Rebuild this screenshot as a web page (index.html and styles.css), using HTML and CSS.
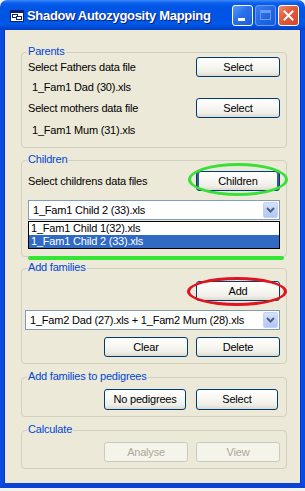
FILE: index.html
```html
<!DOCTYPE html>
<html>
<head>
<meta charset="utf-8">
<link rel="stylesheet" href="styles.css">
</head>
<body>
<div class="window">
  <div class="titlebar">
    <span class="app-icon">
      <svg width="14" height="12" viewBox="0 0 14 12">
        <rect x="0.5" y="0.5" width="13" height="11" fill="#fff" stroke="#0a1f73"/>
        <rect x="1" y="1" width="12" height="2" fill="#0a1f73"/>
        <rect x="2.5" y="4.5" width="5" height="3" fill="none" stroke="#0a1f73"/>
        <rect x="6.5" y="6.5" width="5" height="3" fill="#fff" stroke="#0a1f73"/>
      </svg>
    </span>
    <span class="title">Shadow Autozygosity Mapping</span>
    <div class="caption-buttons">
      <span class="cbtn min"><span class="min-glyph"></span></span>
      <span class="cbtn max"><span class="max-glyph"></span></span>
      <span class="cbtn close">
        <svg width="13" height="13" viewBox="0 0 13 13"><path d="M2.5 2.5 L10.5 10.5 M10.5 2.5 L2.5 10.5" stroke="#fff" stroke-width="2" stroke-linecap="square"/></svg>
      </span>
    </div>
  </div>
  <div class="client">
    <section class="group parents">
      <span class="legend">Parents</span>
      <div class="row">
        <span class="label">Select Fathers data file</span>
        <button class="btn">Select</button>
      </div>
      <div class="file file-dad">1_Fam1 Dad (30).xls</div>
      <div class="row">
        <span class="label">Select mothers data file</span>
        <button class="btn">Select</button>
      </div>
      <div class="file file-mum">1_Fam1 Mum (31).xls</div>
    </section>

    <section class="group children">
      <span class="legend">Children</span>
      <div class="row">
        <span class="label">Select childrens data files</span>
        <button class="btn btn-focus">Children</button>
      </div>
      <div class="combo combo-children">
        <span class="combo-text">1_Fam1 Child 2 (33).xls</span>
        <span class="combo-arrow"><svg width="9" height="6" viewBox="0 0 9 6"><path d="M1 1 L4.5 4.5 L8 1" fill="none" stroke="#4d6185" stroke-width="2"/></svg></span>
      </div>
      <ul class="droplist">
        <li>1_Fam1 Child 1(32).xls</li>
        <li class="selected">1_Fam1 Child 2 (33).xls</li>
      </ul>
      <span class="ring ring-green"></span>
      <span class="mark-line"></span>
    </section>

    <section class="group families">
      <span class="legend">Add families</span>
      <div class="row row-end">
        <button class="btn">Add</button>
      </div>
      <div class="combo combo-families">
        <span class="combo-text">1_Fam2 Dad (27).xls + 1_Fam2 Mum (28).xls</span>
        <span class="combo-arrow"><svg width="9" height="6" viewBox="0 0 9 6"><path d="M1 1 L4.5 4.5 L8 1" fill="none" stroke="#4d6185" stroke-width="2"/></svg></span>
      </div>
      <div class="row row-end pair">
        <button class="btn">Clear</button>
        <button class="btn">Delete</button>
      </div>
      <span class="ring ring-red"></span>
    </section>

    <section class="group pedigrees">
      <span class="legend">Add families to pedigrees</span>
      <div class="row row-end pair pair-narrow">
        <button class="btn">No pedigrees</button>
        <button class="btn">Select</button>
      </div>
    </section>

    <section class="group calculate">
      <span class="legend">Calculate</span>
      <div class="row row-end pair">
        <button class="btn" disabled>Analyse</button>
        <button class="btn" disabled>View</button>
      </div>
    </section>
  </div>
</div>
</body>
</html>
```

FILE: styles.css
```css
* { box-sizing: border-box; }

html, body {
  margin: 0;
  padding: 0;
}

body {
  width: 305px;
  height: 491px;
  background: #f3f3f1;
  font-family: "Liberation Sans", Arial, sans-serif;
  font-size: 11px;
  letter-spacing: -0.2px;
  color: #000;
  overflow: hidden;
}

.window {
  width: 305px;
  height: 488px;
  display: flex;
  flex-direction: column;
}

/* ---------- title bar ---------- */
.titlebar {
  height: 30px;
  flex: none;
  display: flex;
  align-items: center;
  border-radius: 7px 7px 0 0;
  background: linear-gradient(180deg,
    #3d8af7 0px, #0a5fef 3px, #0055e5 7px, #0054e3 18px, #005ae8 24px, #0047d0 28px, #003fc4 30px);
  padding-left: 10px;
}

.app-icon {
  display: flex;
  width: 14px;
  height: 12px;
  margin-top: 2px;
}

.title {
  margin-left: 3px;
  color: #fff;
  font-weight: bold;
  font-size: 13px;
  letter-spacing: -0.3px;
  text-shadow: 1px 1px 0 #0a1e78;
  white-space: nowrap;
}

.caption-buttons {
  margin-left: auto;
  margin-right: 6px;
  display: flex;
  gap: 2px;
}

.cbtn {
  width: 21px;
  height: 21px;
  border: 1px solid #fff;
  border-radius: 3px;
  display: flex;
  align-items: center;
  justify-content: center;
  position: relative;
}

.cbtn.min {
  background: linear-gradient(135deg, #5a9cf8 0%, #2b6fea 45%, #1a5fe0 100%);
}

.min-glyph {
  position: absolute;
  left: 5px;
  bottom: 4px;
  width: 7px;
  height: 3px;
  background: #fff;
}

.cbtn.max {
  border-color: #6f9cf2;
  background: linear-gradient(135deg, #3a7ef0 0%, #1f64e4 60%, #1a5ce0 100%);
}

.max-glyph {
  width: 11px;
  height: 10px;
  border: 1px solid #6d9bf0;
  border-top-width: 3px;
}

.cbtn.close {
  background: linear-gradient(135deg, #f08a6a 0%, #e35d3c 40%, #d4452a 100%);
}

/* ---------- client area ---------- */
.client {
  flex: 1;
  background: #ece9d8;
  border-left: 4px solid #0a4be0;
  border-right: 4px solid #0a4be0;
  border-bottom: 5px solid #0a44d6;
  box-shadow: inset 1px 0 0 #0831d9, inset -1px 0 0 #0831d9;
  padding-top: 22px;
  padding-left: 17px;
}

.group {
  position: relative;
  width: 266px;
  border: 1px solid #d0d0bf;
  border-radius: 4px;
  padding: 0 6px 0 6px;
}

.legend {
  position: absolute;
  left: 5px;
  top: -8px;
  padding: 0 1px;
  line-height: 13px;
  background: #ece9d8;
  color: #0046d5;
  white-space: nowrap;
}

.row {
  display: flex;
  align-items: center;
  justify-content: space-between;
  height: 20px;
}

.row-end {
  justify-content: flex-end;
}

.pair {
  gap: 8px;
}

.label {
  white-space: nowrap;
}

.file {
  padding-left: 4px;
  white-space: nowrap;
}

.btn {
  width: 84px;
  height: 20px;
  padding: 0;
  font: inherit;
  letter-spacing: inherit;
  color: #000;
  border: 1px solid #003c74;
  border-radius: 3px;
  background: linear-gradient(180deg, #ffffff 0%, #f9f8f4 40%, #eeede6 80%, #dcd8cc 100%);
}

.btn-focus {
  box-shadow: inset 2px 0 0 #3a5a8a, inset -2px 0 0 #3a5a8a;
}

.btn:disabled {
  color: #aca899;
  border-color: #cac8bb;
  background: #f5f4ea;
}

/* Parents */
.parents {
  height: 96px;
  padding-top: 4px;
}

.file-dad {
  height: 21px;
  line-height: 21px;
}

.file-mum {
  margin-top: 6px;
  line-height: 13px;
}

/* Children */
.children {
  margin-top: 12px;
  height: 97px;
  padding-top: 10px;
}

.combo {
  display: flex;
  align-items: center;
  height: 20px;
  border: 1px solid #7f9db9;
  background: #fff;
  padding: 1px;
}

.combo-text {
  flex: 1;
  padding-left: 3px;
  white-space: nowrap;
}

.combo-arrow {
  width: 15px;
  height: 16px;
  display: flex;
  align-items: center;
  justify-content: center;
  border-radius: 2px;
  background: linear-gradient(180deg, #d6e1fb 0%, #c4d3f7 50%, #b3c6f3 100%);
  border: 1px solid #c3d3f8;
}

.combo-children {
  margin-top: 9px;
}

.droplist {
  list-style: none;
  margin: 1px 0 0 0;
  padding: 0;
  border: 1px solid #000;
  background: #fff;
}

.droplist li {
  height: 13px;
  line-height: 13px;
  padding-left: 2px;
  white-space: nowrap;
}

.droplist li.selected {
  background: #316ac5;
  color: #fff;
}

.ring {
  position: absolute;
  border-radius: 50%;
  pointer-events: none;
}

.ring-green {
  left: 166px;
  top: 2px;
  width: 100px;
  height: 33px;
  border: 3px solid #38e038;
}

.mark-line {
  position: absolute;
  left: 6px;
  top: 95px;
  width: 256px;
  height: 4px;
  border-radius: 2px;
  background: #33e633;
}

/* Families */
.families {
  margin-top: 11px;
  height: 96px;
  padding-top: 12px;
}

.combo-families {
  margin-top: 9px;
  margin-left: -3px;
}

.families .pair {
  margin-top: 7px;
}

.ring-red {
  left: 165px;
  top: 8px;
  width: 100px;
  height: 29px;
  border: 3px solid #e0141e;
}

/* Pedigrees */
.pedigrees {
  margin-top: 13px;
  height: 40px;
  padding-top: 11px;
}

.pair-narrow {
  gap: 10px;
  padding-right: 2px;
}

.pair-narrow .btn {
  width: 82px;
  height: 21px;
}

/* Calculate */
.calculate {
  margin-top: 13px;
  height: 39px;
  padding-top: 11px;
}
```
